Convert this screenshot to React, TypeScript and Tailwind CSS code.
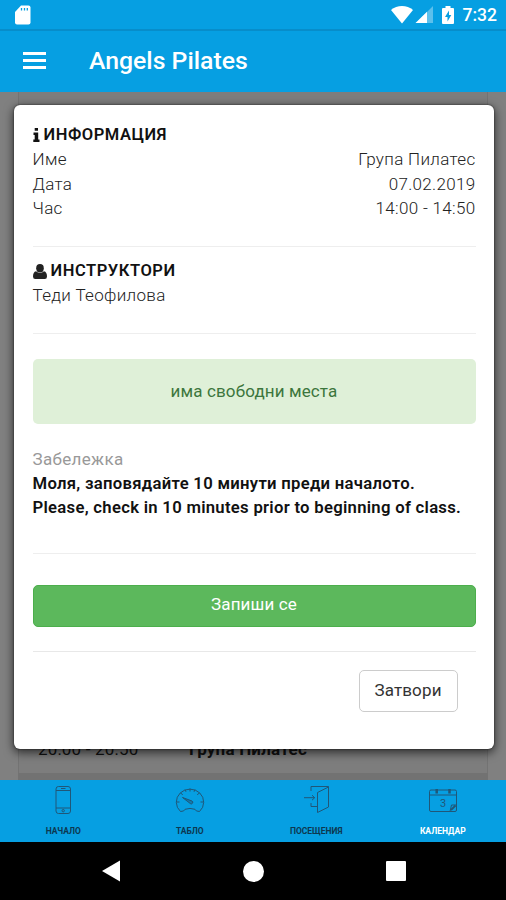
import type { ReactNode } from 'react'

const rows = [
  { label: 'Име', value: 'Група Пилатес' },
  { label: 'Дата', value: '07.02.2019' },
  { label: 'Час', value: '14:00 - 14:50' }
]

function PhoneIcon() {
  return (
    <svg width="30" height="30" viewBox="0 0 30 30" fill="none" stroke="#205778" strokeWidth="1">
      <rect x="8" y="1.5" width="14.5" height="27" rx="2.5" />
      <path d="M8 5.500h14.500M8 23h14.500M13 3.500h4.500" />
      <circle cx="15.200" cy="25.700" r="1.200" />
    </svg>
  )
}

function GaugeIcon() {
  return (
    <svg width="30" height="30" viewBox="0 0 30 30" fill="none" stroke="#205778" strokeWidth="1">
      <path d="M5.500 26.500A13.700 13 0 1 1 24.500 26.500Q20.500 26.500 20 24.300Q15 22.500 10 24.300Q9.500 26.500 5.500 26.500Z" />
      <path d="M15 3.500v3M5.500 8l2.300 1.700M24.500 8l-2.300 1.700M1.500 17h3M28.500 17h-3M10 4.800l1 2M20 4.800l-1 2" />
      <path d="M7.500 12.500l9.500 3.500a1.500 1.500 0 0 1-1.500 2.700z" fill="#205778" fillOpacity="0.5" />
    </svg>
  )
}

function DoorIcon() {
  return (
    <svg width="30" height="30" viewBox="0 0 30 30" fill="none" stroke="#205778" strokeWidth="1">
      <path d="M10 6V1.500h17.500V22L16.500 27.500V7.500L27.500 2" />
      <path d="M3 12.700h10.500M11 10.200l2.700 2.500-2.700 2.500M10 18v3.500h6.500" />
    </svg>
  )
}

function CalendarIcon() {
  return (
    <svg width="30" height="30" viewBox="0 0 30 30" fill="none" stroke="#205778" strokeWidth="1">
      <path d="M3 5h24a1.500 1.500 0 0 1 1.500 1.500V25a1.500 1.500 0 0 1-1.500 1.500H3A1.500 1.500 0 0 1 1.500 25V6.500A1.500 1.500 0 0 1 3 5zM1.500 10h27" />
      <path d="M8.700 4v4.500M21.500 4v4.500" strokeWidth="2.500" />
      <path d="M28.500 20h-5l-1.500 6.500" />
      <path d="M23 25l4.500-4.500" strokeWidth="1.800" />
      <text x="15" y="22" fontSize="11" textAnchor="middle" fill="#205778" stroke="none">
        3
      </text>
    </svg>
  )
}

const tabs = [
  { label: 'НАЧАЛО', icon: <PhoneIcon />, active: false },
  { label: 'ТАБЛО', icon: <GaugeIcon />, active: false },
  { label: 'ПОСЕЩЕНИЯ', icon: <DoorIcon />, active: false },
  { label: 'КАЛЕНДАР', icon: <CalendarIcon />, active: true }
]

function StatusBar() {
  return (
    <div className="flex h-[31px] items-center justify-between border-b-2 border-[#078dca] pr-[9px] pl-[15px] text-white">
      <svg width="16" height="20" viewBox="0 0 16 20">
        <path d="M6 0.500h7.500a2 2 0 0 1 2 2v15a2 2 0 0 1-2 2H2a2 2 0 0 1-2-2V7z" fill="#fff" />
        <path d="M6.500 3v2.500M9.500 3v2.500M12.300 3v2.500" stroke="#069fe2" strokeWidth="1.300" />
      </svg>
      <div className="flex items-center pt-[1px]">
        <svg width="22" height="18" viewBox="0 0 22 18" fill="#fff">
          <path d="M0 4C6-1.300 16-1.300 22 4L11 17.500z" />
        </svg>
        <svg className="ml-[2px]" width="18" height="18" viewBox="0 0 18 18" fill="#fff">
          <path d="M18 0v17H1z" opacity="0.35" />
          <path d="M12 5.700V17H0.500z" />
        </svg>
        <svg className="mr-[9px] ml-[9px]" width="12" height="18" viewBox="0 0 12 18">
          <path d="M3.500 0h5v2H11a1 1 0 0 1 1 1v14a1 1 0 0 1-1 1H1a1 1 0 0 1-1-1V3a1 1 0 0 1 1-1h2.500z" fill="#fff" />
          <path d="M7 4.500L3 11h2.500v4.500L9.300 9H7z" fill="#069fe2" />
        </svg>
        <span className="pt-[2px] text-[17.5px] leading-none font-medium">7:32</span>
      </div>
    </div>
  )
}

function Heading({ icon, children }: { icon: ReactNode; children: ReactNode }) {
  return (
    <h2 className="flex items-center gap-[4px] text-[16.5px] leading-[24.6px] font-semibold tracking-[0.55px] text-[#111]">
      {icon}
      {children}
    </h2>
  )
}

function Modal() {
  return (
    <div className="absolute top-[13px] left-[14px] h-[644px] w-[480px] rounded-[6px] bg-white px-[18.5px] pt-[17.5px] text-[17px] leading-[24.6px] font-light tracking-[0.33px] text-[#222] shadow-[0_3px_10px_1px_rgba(0,0,0,0.6),0_0_2px_rgba(0,0,0,0.7)]">
      <Heading
        icon={
          <svg width="7" height="14" viewBox="0 0 7 14" fill="#111">
            <path d="M1.700 0h3.300v2.800H1.700zM0.500 4.500h4.700v7H6.500V14H0.300v-2.500h1.400V7H0.500z" />
          </svg>
        }
      >
        ИНФОРМАЦИЯ
      </Heading>
      {rows.map(row => (
        <div key={row.label} className="flex justify-between">
          <span>{row.label}</span>
          <span>{row.value}</span>
        </div>
      ))}
      <hr className="mt-[25px] mb-[12px] border-[#eee]" />
      <Heading
        icon={
          <svg width="14" height="15" viewBox="0 0 14 15" fill="#222">
            <ellipse cx="7" cy="4.200" rx="3.800" ry="4.200" />
            <path d="M3 7.300Q7 10.800 11 7.300Q14 8 14 12.500Q14 15 11.800 15H2.200Q0 15 0 12.500Q0 8 3 7.300z" />
          </svg>
        }
      >
        ИНСТРУКТОРИ
      </Heading>
      <p>Теди Теофилова</p>
      <hr className="mt-[25px] mb-[25px] border-[#eee]" />
      <div className="flex h-[65px] items-center justify-center rounded-[5px] bg-[#dff0d8] font-normal tracking-[0.12px] text-[#3c763d]">
        има свободни места
      </div>
      <p className="mt-[23px] font-normal text-[#999]">Забележка</p>
      <p className="text-[16.7px] font-semibold tracking-[0.28px] text-[#111]">
        Моля, заповядайте 10 минути преди началото.
        <br />
        Please, check in 10 minutes prior to beginning of class.
      </p>
      <hr className="mt-[32px] mb-[31px] border-[#eee]" />
      <button className="h-[42px] w-full rounded-[5px] border border-[#4cae4c] bg-[#5cb85c] pb-[3px] font-normal tracking-[0.15px] text-white">
        Запиши се
      </button>
      <hr className="mt-[24px] mb-[18px] border-[#e8e8e8]" />
      <div className="flex justify-end pr-[18px]">
        <button className="h-[42px] w-[99px] rounded-[5px] border border-[#ccc] pb-[2px] font-normal tracking-[0.15px] text-[#333]">
          Затвори
        </button>
      </div>
    </div>
  )
}

export default function App() {
  return (
    <div className="flex h-[900px] w-[506px] flex-col overflow-hidden bg-black font-[Roboto,sans-serif]">
      <header className="bg-[#069fe2] text-white">
        <StatusBar />
        <div className="flex h-[61px] items-center pl-[23px]">
          <div className="flex w-[23px] flex-col gap-[4px] pb-[2px]">
            <span className="h-[3px] bg-white" />
            <span className="h-[3px] bg-white" />
            <span className="h-[3px] bg-white" />
          </div>
          <h1 className="ml-[43px] text-[24.8px] leading-none font-medium">Angels Pilates</h1>
        </div>
      </header>
      <main className="relative flex h-[688px] flex-col bg-[#808080] px-[18px]">
        <div className="flex grow items-end border-x border-[#737373] bg-[#7d7d7d] pb-[14px] pl-[19px] text-[17px] leading-[20px] tracking-[0.2px] text-[#111]">
          <span className="w-[151px]">20:00 - 20:50</span>
          <b className="font-bold">Група Пилатес</b>
        </div>
        <div className="h-[7px] bg-[#727272]" />
        <Modal />
      </main>
      <nav className="grid h-[62px] grid-cols-4 bg-[#069fe2]">
        {tabs.map(tab => (
          <div
            key={tab.label}
            className={
              tab.active
                ? 'flex flex-col items-center pt-[5px] text-white'
                : 'flex flex-col items-center pt-[5px] text-[#0d3850]'
            }
          >
            {tab.icon}
            <span className="mt-[11px] text-[8.5px] leading-[10px] font-bold">{tab.label}</span>
          </div>
        ))}
      </nav>
      <footer className="flex h-[58px] items-center justify-between pr-[100px] pl-[102px]">
        <svg width="18" height="22" viewBox="0 0 18 22" fill="#fff">
          <path d="M18 0.500v21L0 11z" />
        </svg>
        <span className="ml-[1px] size-[21px] rounded-full bg-white" />
        <span className="size-[20px] rounded-[1px] bg-white" />
      </footer>
    </div>
  )
}
